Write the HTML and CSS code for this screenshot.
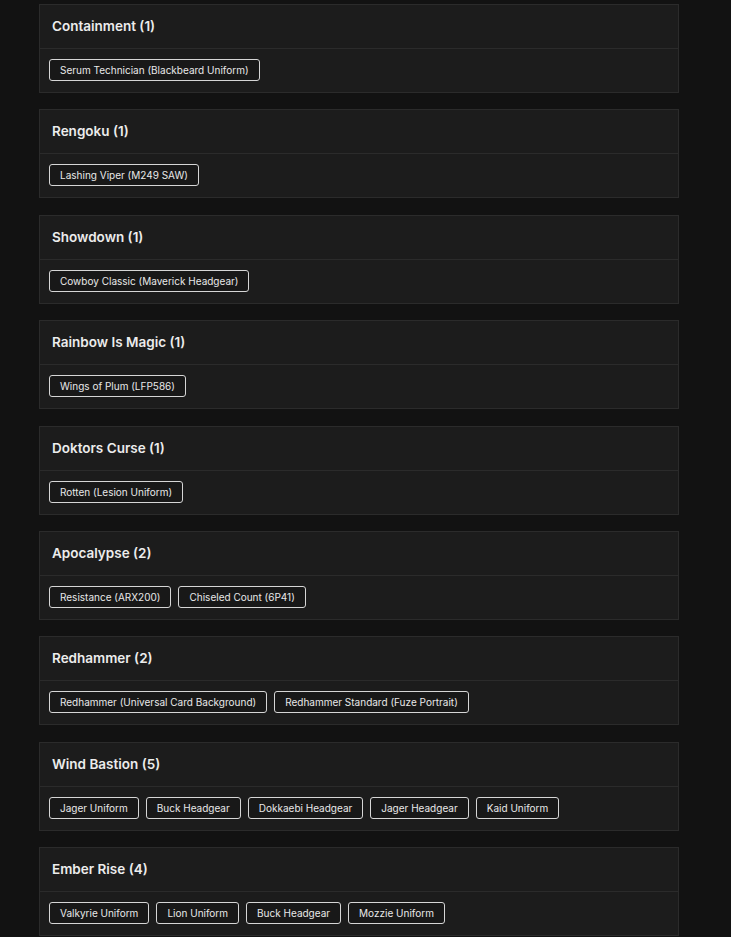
FILE: index.html
```html
<!DOCTYPE html>
<html>
<head>
<meta charset="utf-8">
<link rel="stylesheet" href="styles.css">
</head>
<body>
<div class="list">
  <section class="card">
    <div class="card-head">Containment (1)</div>
    <div class="card-body"><span class="tag">Serum Technician (Blackbeard Uniform)</span></div>
  </section>
  <section class="card">
    <div class="card-head">Rengoku (1)</div>
    <div class="card-body"><span class="tag">Lashing Viper (M249 SAW)</span></div>
  </section>
  <section class="card">
    <div class="card-head">Showdown (1)</div>
    <div class="card-body"><span class="tag">Cowboy Classic (Maverick Headgear)</span></div>
  </section>
  <section class="card">
    <div class="card-head">Rainbow Is Magic (1)</div>
    <div class="card-body"><span class="tag">Wings of Plum (LFP586)</span></div>
  </section>
  <section class="card">
    <div class="card-head">Doktors Curse (1)</div>
    <div class="card-body"><span class="tag">Rotten (Lesion Uniform)</span></div>
  </section>
  <section class="card">
    <div class="card-head">Apocalypse (2)</div>
    <div class="card-body"><span class="tag">Resistance (ARX200)</span><span class="tag">Chiseled Count (6P41)</span></div>
  </section>
  <section class="card">
    <div class="card-head">Redhammer (2)</div>
    <div class="card-body"><span class="tag">Redhammer (Universal Card Background)</span><span class="tag">Redhammer Standard (Fuze Portrait)</span></div>
  </section>
  <section class="card">
    <div class="card-head">Wind Bastion (5)</div>
    <div class="card-body"><span class="tag">Jager Uniform</span><span class="tag">Buck Headgear</span><span class="tag">Dokkaebi Headgear</span><span class="tag">Jager Headgear</span><span class="tag">Kaid Uniform</span></div>
  </section>
  <section class="card">
    <div class="card-head">Ember Rise (4)</div>
    <div class="card-body"><span class="tag">Valkyrie Uniform</span><span class="tag">Lion Uniform</span><span class="tag">Buck Headgear</span><span class="tag">Mozzie Uniform</span></div>
  </section>
</div>
</body>
</html>
```
FILE: styles.css
```css
html, body {
  margin: 0;
  padding: 0;
  background: #121212;
}
body {
  font-family: Inter, "Noto Sans", sans-serif;
  color: #e6e6e6;
}
.list {
  width: 640px;
  padding: 4px 0 0 39px;
}
.card {
  background: #1c1c1c;
  border: 1px solid #2b2b2b;
  margin-bottom: 16.375px;
}
.card-head {
  display: flex;
  align-items: center;
  padding-left: 12px;
  padding-bottom: 1px;
  box-sizing: border-box;
  height: 44px;
  border-bottom: 1px solid #2b2b2b;
  font-size: 13.5px;
  font-weight: 600;
  color: #ececec;
}
.card-body {
  display: flex;
  flex-wrap: wrap;
  gap: 7px;
  padding: 10px 9px 11px;
}
.tag {
  display: inline-flex;
  align-items: center;
  height: 20px;
  padding: 0 10px;
  border: 1px solid #d6d6d6;
  border-radius: 3px;
  font-size: 10px;
  color: #e8e8e8;
  background: #181818;
}
```
